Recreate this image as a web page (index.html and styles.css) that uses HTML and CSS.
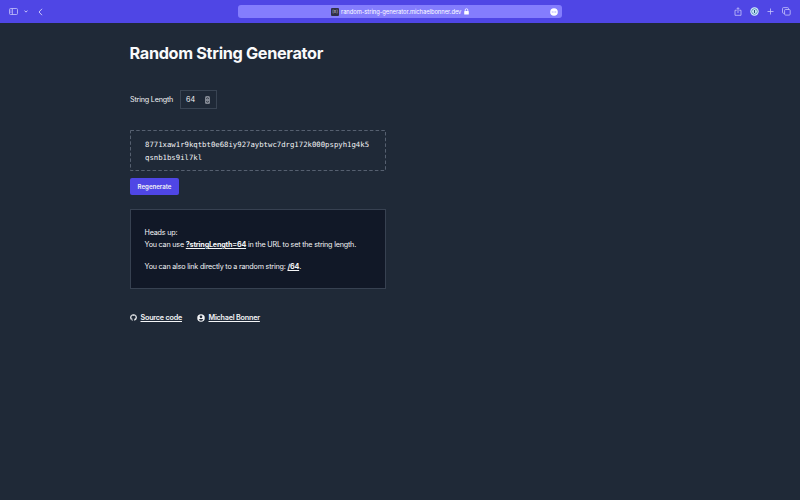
FILE: index.html
```
<!DOCTYPE html>
<html lang="en">
<head>
<meta charset="utf-8">
<title>Random String Generator</title>
<link rel="stylesheet" href="styles.css">
</head>
<body>
<header class="toolbar">
  <div class="nav">
    <svg width="9" height="7" viewBox="0 0 9 7"><rect x=".5" y=".5" width="8" height="6" rx="1"/><path d="M3.4 .5v6M1.5 2h.9M1.5 3.3h.9M1.5 4.6h.9"/></svg>
    <svg class="chevron" width="4" height="3" viewBox="0 0 4 3"><path d="M.5 .7L2 2.1 3.500 .7"/></svg>
    <svg class="back" width="5" height="8" viewBox="0 0 5 8"><path d="M4 .8L1 4l3 3.200"/></svg>
  </div>
  <div class="address">
    <span class="favicon">[x]</span>
    <span class="host">random-string-generator.michaelbonner.dev</span>
    <svg class="lock" width="5" height="7" viewBox="0 0 5 7"><path d="M1.200 3V2a1.300 1.300 0 0 1 2.600 0v1"/><rect x=".2" y="2.900" width="4.600" height="3.700" rx=".6"/></svg>
    <svg class="more" width="8" height="8" viewBox="0 0 8 8"><circle cx="4" cy="4" r="3.800"/><path d="M1.800 4h1M3.500 4h1M5.200 4h1"/></svg>
  </div>
  <div class="actions">
    <svg width="8" height="9" viewBox="0 0 8 9"><path d="M2.700 3.300H1v5h6v-5H5.300M4 6V.8M2.500 2.200L4 .7l1.500 1.500"/></svg>
    <svg class="key" width="9" height="9" viewBox="0 0 9 9"><circle class="ring" cx="4.500" cy="4.500" r="4.200"/><circle class="core" cx="4.500" cy="4.500" r="2.800"/><path d="M4.500 3v3"/></svg>
    <svg width="7" height="7" viewBox="0 0 7 7"><path d="M3.500 .5v6M.5 3.500h6"/></svg>
    <svg width="9" height="9" viewBox="0 0 9 9"><path d="M2.600 6.300H1.500a1 1 0 0 1-1-1V1.600a1 1 0 0 1 1-1h4a1 1 0 0 1 1 1v.9"/><rect x="2.600" y="2.500" width="5.600" height="5.600" rx="1"/></svg>
  </div>
</header>
<main class="page">
  <h1>Random String Generator</h1>
  <div class="field">
    <span class="label">String Length</span>
    <div class="number"><span>64</span>
      <svg width="5" height="8" viewBox="0 0 5 8"><rect width="5" height="8" rx="1.500"/><path d="M1.200 3L2.500 1.600 3.800 3M1.200 5l1.300 1.400L3.800 5"/></svg>
    </div>
  </div>
  <div class="result">
    <svg class="dashes" width="256" height="41"><rect x=".5" y=".5" width="255" height="40"/></svg>
    8771xaw1r9kqtbt0e68iy927aybtwc7drg172k000pspyh1g4k5<br>qsnb1bs9il7kl
  </div>
  <button class="regenerate">Regenerate</button>
  <section class="notice">
    <p>Heads up:<br>You can use <a>?stringLength=64</a> in the URL to set the string length.</p>
    <p>You can also link directly to a random string: <a>/64</a>.</p>
  </section>
  <footer class="links">
    <svg width="7" height="7" viewBox="0 0 24 24"><path d="M12 .8a11.500 11.500 0 0 0-3.700 22.400c.6.100.8-.2.800-.6v-2.200c-3.200.7-3.900-1.400-3.900-1.400-.5-1.300-1.300-1.700-1.300-1.700-1-.7.100-.7.100-.7 1.200.1 1.800 1.200 1.800 1.200 1 1.800 2.700 1.300 3.400 1 .1-.8.4-1.300.7-1.600-2.600-.3-5.300-1.300-5.300-5.800 0-1.300.5-2.300 1.200-3.100-.1-.3-.5-1.500.1-3.100 0 0 1-.3 3.200 1.200a11 11 0 0 1 5.800 0c2.200-1.500 3.200-1.200 3.200-1.200.6 1.600.2 2.800.1 3.100.7.8 1.200 1.800 1.200 3.100 0 4.500-2.700 5.500-5.300 5.800.4.400.8 1.100.8 2.200v3.200c0 .4.200.7.800.6A11.500 11.500 0 0 0 12 .8z"/></svg>
    <a class="source">Source code</a>
    <svg class="person" width="8" height="8" viewBox="0 0 16 16"><path fill-rule="evenodd" d="M8 .5a7.500 7.500 0 1 1 0 15 7.500 7.500 0 0 1 0-15zM8 3a2.700 2.700 0 1 0 0 5.400A2.700 2.700 0 0 0 8 3zM3.500 11.200a5.500 5.500 0 0 0 9 0C11.500 9.700 4.500 9.700 3.500 11.200z"/></svg>
    <a class="author">Michael Bonner</a>
  </footer>
</main>
</body>
</html>
```
FILE: styles.css
```
* { box-sizing: border-box; }
body {
  margin: 0;
  height: 500px;
  overflow: hidden;
  background: #1f2937;
  color: #f3f4f6;
  font: 7.2px/12.5px Inter, sans-serif;
  letter-spacing: -.2px;
}
svg { display: block; flex: none; }
.toolbar {
  height: 23px;
  background: #4f46e5;
  display: grid;
  grid-template-columns: 238px 324px 1fr;
  align-items: center;
}
.toolbar svg { fill: none; stroke: #c7c4fa; stroke-width: .8; }
.nav { display: flex; align-items: center; padding-left: 9px; }
.nav .chevron { margin-left: 6px; stroke-width: 1; }
.nav .back { margin-left: 10px; stroke-width: 1; }
.address {
  height: 13px;
  border-radius: 3px;
  background: #847dfd;
  display: flex;
  align-items: center;
  padding: 0 4px 0 93px;
  color: #fff;
  font-size: 5.8px;
  letter-spacing: -.04px;
}
.favicon {
  width: 8px;
  height: 8px;
  border-radius: 1px;
  background: #303046;
  color: #d1d5db;
  font-size: 4.5px;
  line-height: 7px;
  text-align: center;
}
.host { margin-left: 2px; width: 120px; padding-top: 1px; white-space: nowrap; }
.toolbar .lock { margin-left: 3px; stroke: #fff; }
.lock rect { fill: #fff; stroke: none; }
.toolbar .more { margin-left: auto; fill: #fff; stroke: none; }
.more path { stroke: #847dfd; }
.actions { display: flex; align-items: center; padding-left: 172px; gap: 8px; }
.toolbar .ring { fill: #d7efff; stroke: none; }
.toolbar .core { fill: #d7efff; stroke: #397aa6; }
.toolbar .key path { stroke: #245a83; stroke-width: 1.2; }
.page { width: 256px; margin-left: 130px; padding-top: 20px; }
h1 {
  margin: 0 0 0 -.5px;
  font-size: 16.3px;
  line-height: 21px;
  font-weight: 700;
  letter-spacing: -.34px;
  color: #f9fafb;
  white-space: nowrap;
}
.field { display: flex; align-items: center; height: 19px; margin-top: 26px; }
.label { width: 50px; padding-top: 2px; white-space: nowrap; }
.number {
  width: 37px;
  height: 19px;
  border: 1px solid #394453;
  display: flex;
  align-items: center;
  justify-content: space-between;
  padding: 0 6px 0 5px;
}
.number span { padding-top: 2px; letter-spacing: 0; }
.number rect { fill: #828893; }
.number path { fill: none; stroke: #252d39; stroke-width: .8; }
.result {
  position: relative;
  height: 41px;
  margin-top: 21px;
  padding: 9px 0 0 15px;
  font: 7.3px/12.5px "DejaVu Sans Mono", monospace;
  letter-spacing: 0;
  white-space: nowrap;
}
.dashes { position: absolute; inset: 0; fill: none; stroke: #566070; stroke-dasharray: 3.5 2.2; }
.regenerate {
  display: block;
  width: 49px;
  height: 17px;
  margin: 7px 0 0;
  padding: 0;
  border: 0;
  border-radius: 2px;
  background: #4f46e5;
  color: #f3f4f6;
  font: 600 6.1px/17px Inter, sans-serif;
}
.notice {
  height: 80px;
  margin-top: 14px;
  padding: 16.500px 0 0 13.5px;
  border: 1px solid #374151;
  background: #111827;
  white-space: nowrap;
}
.notice p { margin: 0 0 9px; }
a { font-weight: 700; text-decoration: underline; text-underline-offset: 1px; }
.links { display: flex; align-items: center; height: 13px; margin-top: 22px; white-space: nowrap; }
.links svg { fill: #f3f4f6; }
.links a { padding-top: 2px; font-weight: 600; }
.source { width: 42px; margin-left: 3.5px; }
.person { margin-left: 14px; }
.author { margin-left: 4px; }
```
